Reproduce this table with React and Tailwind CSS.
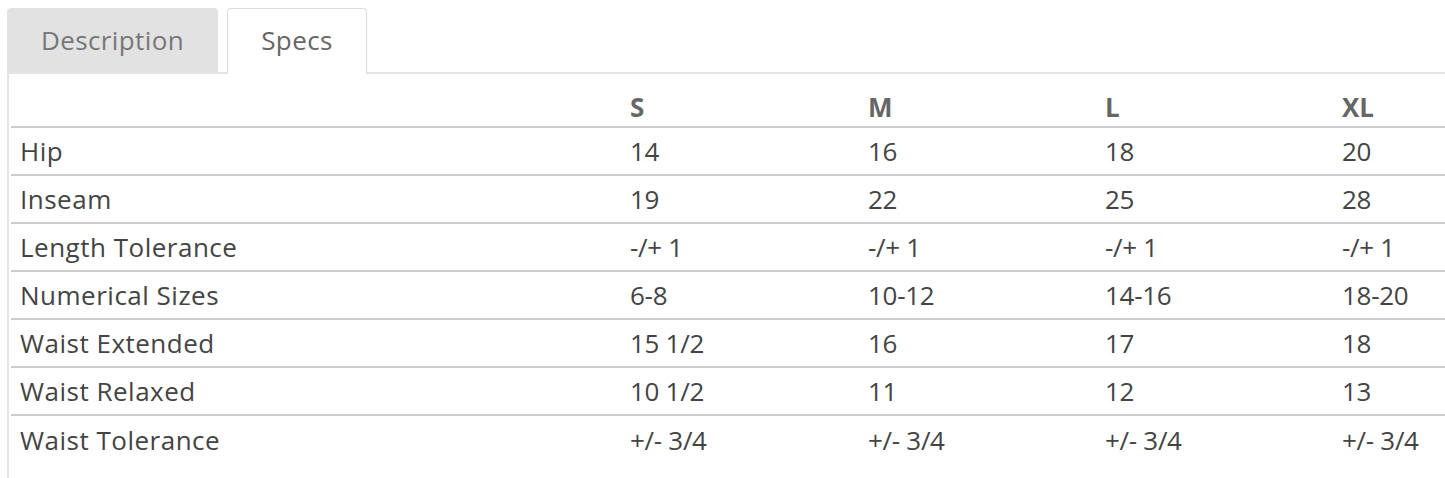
import React from "react";

const rows = [
  ["Hip", "14", "16", "18", "20"],
  ["Inseam", "19", "22", "25", "28"],
  ["Length Tolerance", "-/+ 1", "-/+ 1", "-/+ 1", "-/+ 1"],
  ["Numerical Sizes", "6-8", "10-12", "14-16", "18-20"],
  ["Waist Extended", "15 1/2", "16", "17", "18"],
  ["Waist Relaxed", "10 1/2", "11", "12", "13"],
  ["Waist Tolerance", "+/- 3/4", "+/- 3/4", "+/- 3/4", "+/- 3/4"],
];

export default function App() {
  return (
    <div
      className="w-[1445px] h-[478px] overflow-hidden bg-white pl-[7px] pt-[8px]"
      style={{ fontFamily: '"Open Sans", sans-serif' }}
    >
      <div className="flex items-end gap-[9px] relative z-10">
        <div className="w-[211px] h-[64px] bg-[#e2e2e2] rounded-t-[4px] flex items-center justify-center text-[26px] tracking-[0.4px] text-[#777]">
          Description
        </div>
        <div className="w-[140px] h-[66px] -mb-[2px] bg-white border border-b-0 border-[#dcdcdc] rounded-t-[4px] flex items-center justify-center text-[26px] tracking-[0.4px] text-[#666] pb-[2px]">
          Specs
        </div>
      </div>
      <div className="border-l-2 border-t-2 border-[#e4e4e4] pl-[2px] h-[420px]">
        <table className="border-collapse w-full table-fixed text-[26px] text-[#444]">
          <colgroup>
            <col className="w-[610px]" />
            <col className="w-[238px]" />
            <col className="w-[237px]" />
            <col className="w-[237px]" />
            <col />
          </colgroup>
          <thead>
            <tr className="h-[53px] border-b-2 border-[#cccccc]">
              <th></th>
              {["S", "M", "L", "XL"].map((s) => (
                <th
                  key={s}
                  className="text-left font-bold text-[#666] pl-[9px] align-bottom pb-[3px] leading-[32px]"
                >
                  {s}
                </th>
              ))}
            </tr>
          </thead>
          <tbody>
            {rows.map((r, i) => (
              <tr
                key={r[0]}
                className={
                  i < rows.length - 1
                    ? "h-[48px] border-b-2 border-[#cccccc]"
                    : "h-[48px]"
                }
              >
                {r.map((c, j) => (
                  <td
                    key={j}
                    className={
                      j === 0
                        ? "pl-[9px] align-middle leading-[30px] tracking-[0.5px]"
                        : "pl-[9px] align-middle leading-[30px] tracking-[-0.3px]"
                    }
                  >
                    {c}
                  </td>
                ))}
              </tr>
            ))}
          </tbody>
        </table>
      </div>
    </div>
  );
}
